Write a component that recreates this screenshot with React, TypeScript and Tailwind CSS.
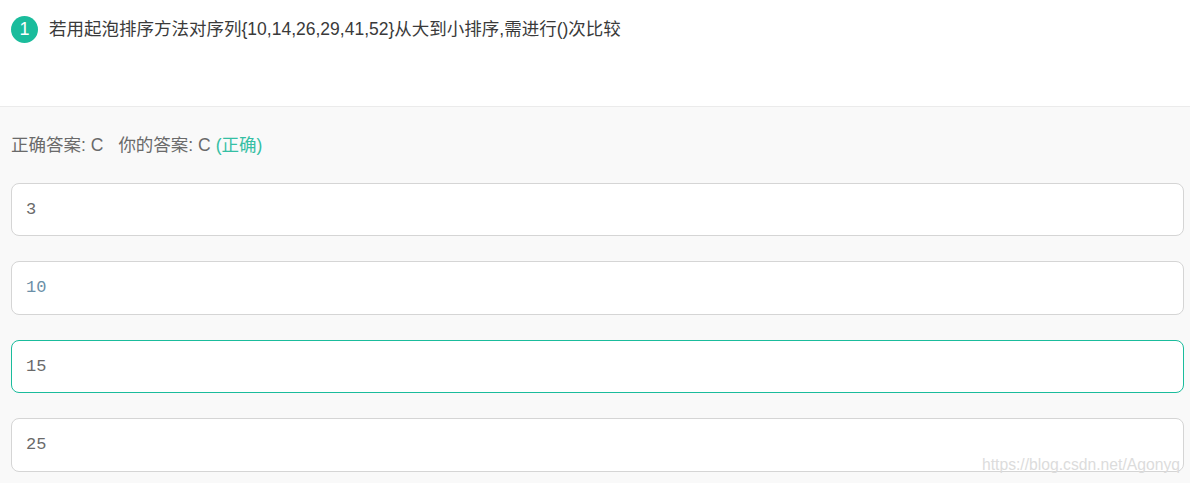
const sans = "font-['Liberation_Sans','Noto_Sans_CJK_SC',sans-serif]";

function Option({ text, selected, blue }: { text: string; selected?: boolean; blue?: boolean }) {
  return (
    <div
      className={`flex h-[53.5px] items-center rounded-[8px] border bg-white pl-[14px] font-['Liberation_Mono',monospace] text-[17px] ${
        selected ? "border-[#1abc9c]" : "border-[#d5d5d5]"
      } ${blue ? "text-[#6b8fa8]" : "text-[#6a6a6a]"}`}
    >
      {text}
    </div>
  );
}

export default function App() {
  return (
    <div className={`relative h-[483px] w-[1190px] overflow-hidden bg-[#f9f9f9] ${sans}`}>
      <div className="h-[107px] border-b border-[#ebebeb] bg-white pl-[11px] pt-[16px]">
        <div className="flex items-center">
          <span className="flex h-[27px] w-[27px] items-center justify-center rounded-full bg-[#1abc9c] text-[18px] text-white">
            1
          </span>
          <span className="ml-[11px] text-[17.5px] leading-[27px] text-[#3a3a3a]">
            若用起泡排序方法对序列{"{"}10,14,26,29,41,52{"}"}从大到小排序,需进行()次比较
          </span>
        </div>
      </div>
      <div className="pl-[11px] pr-[6px] pt-[27px]">
        <div className="h-[22px] text-[17.5px] leading-[22px] text-[#6a6a6a]">
          正确答案: C<span className="ml-[15px]">你的答案: C</span>{" "}
          <span className="text-[#35bfa4]">(正确)</span>
        </div>
        <div className="mt-[26.7px] flex flex-col gap-[25px]">
          <Option text="3" />
          <Option text="10" blue />
          <Option text="15" selected />
          <Option text="25" />
        </div>
      </div>
      <div className="absolute left-[982px] top-[454px] text-[15.7px] leading-[22px] text-[#dcdcdc]">
        https://blog.csdn.net/Agonyq
      </div>
    </div>
  );
}
